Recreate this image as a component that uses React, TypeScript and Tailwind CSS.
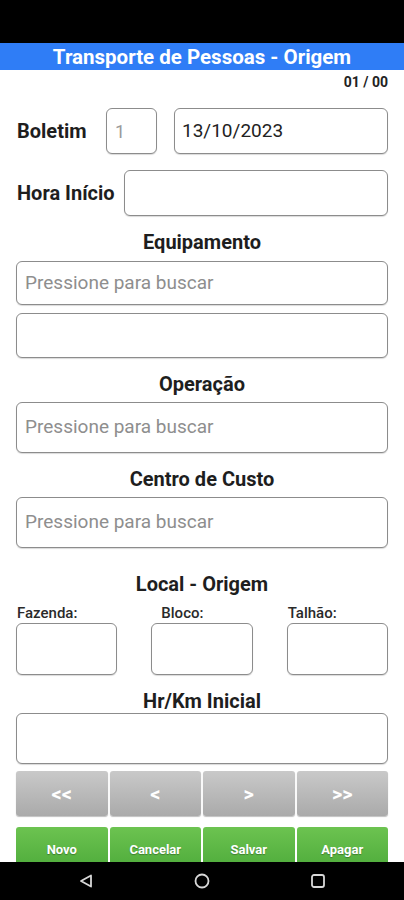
const font = { fontFamily: "Roboto, 'Liberation Sans', sans-serif" };

function Box({ className = "", children }: { className?: string; children?: React.ReactNode }) {
  return (
    <div
      className={`flex items-center rounded-[6px] border border-[#8c8c8c] bg-white shadow-[0_1px_1px_rgba(0,0,0,0.15)] ${className}`}
    >
      {children}
    </div>
  );
}

function SearchBox({ h }: { h: string }) {
  return (
    <Box className={`${h} px-[8px]`}>
      <span className="text-[19px] text-[#8e8e8e]">Pressione para buscar</span>
    </Box>
  );
}

function Heading({ text, mt }: { text: string; mt: string }) {
  return (
    <h2 className={`${mt} text-center text-[20px] leading-[22px] font-bold text-[#1e1e1e]`}>{text}</h2>
  );
}

const navs = ["<<", "<", ">", ">>"];
const actions = ["Novo", "Cancelar", "Salvar", "Apagar"];

export default function App() {
  return (
    <div className="flex h-[900px] w-[404px] flex-col overflow-hidden bg-white" style={font}>
      <div className="h-[43px] shrink-0 bg-black" />
      <div className="flex h-[27px] shrink-0 items-center justify-center bg-[#2f7df6]">
        <h1 className="text-[20.5px] leading-[24px] font-bold text-white">Transporte de Pessoas - Origem</h1>
      </div>

      <div className="flex-1 overflow-hidden px-[16px]">
        <p className="mt-[5px] text-right text-[14px] leading-[14px] font-bold text-[#222]">01 / 00</p>

        <div className="mt-[19px] flex h-[46px] items-center">
          <span className="w-[90px] pl-[1px] text-[20px] font-bold text-[#1e1e1e]">Boletim</span>
          <Box className="h-full w-[51px] px-[8px]">
            <span className="text-[18px] text-[#9a9a9a]">1</span>
          </Box>
          <Box className="ml-[17px] h-full flex-1 px-[7px]">
            <span className="text-[19px] text-[#222]">13/10/2023</span>
          </Box>
        </div>

        <div className="mt-[16px] flex h-[46px] items-center">
          <span className="w-[108px] pl-[1px] text-[20px] font-bold text-[#1e1e1e]">Hora Início</span>
          <Box className="h-full flex-1" />
        </div>

        <Heading text="Equipamento" mt="mt-[15px]" />
        <div className="mt-[8px]">
          <SearchBox h="h-[44px]" />
        </div>
        <Box className="mt-[8px] h-[45px]" />

        <Heading text="Operação" mt="mt-[15px]" />
        <div className="mt-[7px]">
          <SearchBox h="h-[51px]" />
        </div>

        <Heading text="Centro de Custo" mt="mt-[15px]" />
        <div className="mt-[7px]">
          <SearchBox h="h-[51px]" />
        </div>

        <Heading text="Local - Origem" mt="mt-[25px]" />
        <div className="mt-[10px] grid grid-cols-3 gap-x-[34px]">
          <span className="pl-[1px] text-[15px] leading-[16px] font-medium text-[#2a2a2a]">Fazenda:</span>
          <span className="pl-[10px] text-[15px] leading-[16px] font-medium text-[#2a2a2a]">Bloco:</span>
          <span className="pl-[1px] text-[15px] leading-[16px] font-medium text-[#2a2a2a]">Talhão:</span>
          <Box className="mt-[2px] h-[52px]" />
          <Box className="mt-[2px] h-[52px]" />
          <Box className="mt-[2px] h-[52px]" />
        </div>

        <Heading text="Hr/Km Inicial" mt="mt-[15px]" />
        <Box className="mt-[1px] h-[51px]" />

        <div className="mt-[7px] grid grid-cols-4 gap-x-[2px]">
          {navs.map((n) => (
            <button
              key={n}
              className="flex h-[45px] items-center justify-center rounded-[3px] bg-gradient-to-b from-[#c9c9c9] to-[#aaaaaa] text-[20px] leading-none font-bold text-white shadow-[0_1px_1px_rgba(0,0,0,0.25)]"
            >
              {n}
            </button>
          ))}
        </div>

        <div className="mt-[11px] grid grid-cols-4 gap-x-[2px]">
          {actions.map((a) => (
            <button
              key={a}
              className="flex h-[45px] items-center justify-center rounded-[3px] bg-gradient-to-b from-[#6cc350] to-[#4caa3a] text-[13px] font-bold text-white [text-shadow:0_1px_1px_rgba(0,0,0,0.3)]"
            >
              {a}
            </button>
          ))}
        </div>
      </div>

      <div className="flex h-[38px] shrink-0 items-center bg-black">
        <div className="flex w-full justify-between px-[78px]">
          <svg width="16" height="16" viewBox="0 0 16 16" fill="none" stroke="#d8d8d8" strokeWidth="1.8" strokeLinejoin="round">
            <path d="M13 2.5 L3 8 L13 13.5 Z" />
          </svg>
          <svg width="16" height="16" viewBox="0 0 16 16" fill="none" stroke="#d8d8d8" strokeWidth="1.8">
            <circle cx="8" cy="8" r="6.5" />
          </svg>
          <svg width="16" height="16" viewBox="0 0 16 16" fill="none" stroke="#d8d8d8" strokeWidth="1.8">
            <rect x="2" y="2" width="12" height="12" rx="2" />
          </svg>
        </div>
      </div>
    </div>
  );
}
